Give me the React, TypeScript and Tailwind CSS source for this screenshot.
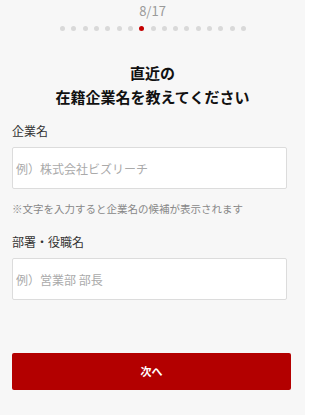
import React from "react";

export default function App() {
  const dots = Array.from({ length: 17 }, (_, i) => i);
  return (
    <div
      className="w-[305px] h-[415px] bg-[#f7f7f7] overflow-hidden"
      style={{ fontFamily: '"Noto Sans CJK JP", "Noto Sans", sans-serif' }}
    >
      <div className="pt-[3px] text-center text-[13px] leading-[16px] text-[#9a9a9a]">8/17</div>
      <div className="mt-[7px] flex justify-center gap-[6.3px] pl-[1px]">
        {dots.map((i) => (
          <span
            key={i}
            className={
              i === 7
                ? "block w-[5px] h-[5px] rounded-full bg-[#c40000]"
                : "block w-[5px] h-[5px] rounded-full bg-[#d9d9d9]"
            }
          />
        ))}
      </div>
      <h1 className="mt-[30px] text-center text-[15px] leading-[24px] font-bold text-[#111]">
        直近の
        <br />
        在籍企業名を教えてください
      </h1>
      <div className="px-[12px]">
        <div className="mt-[13px] text-[12px] leading-[18px] text-[#333]">企業名</div>
        <input
          className="mt-[7px] block w-[275px] h-[42px] bg-white border border-[#dcdcdc] rounded-[2px] px-[3px] text-[12px] text-[#333] placeholder:text-[#aaaaaa] outline-none"
          placeholder="例）株式会社ビズリーチ"
        />
        <div className="mt-[13px] text-[10.5px] leading-[14px] text-[#888]">
          ※文字を入力すると企業名の候補が表示されます
        </div>
        <div className="mt-[17px] text-[12px] leading-[18px] text-[#333]">部署・役職名</div>
        <input
          className="mt-[7px] block w-[275px] h-[42px] bg-white border border-[#dcdcdc] rounded-[2px] px-[3px] text-[12px] text-[#333] placeholder:text-[#aaaaaa] outline-none"
          placeholder="例）営業部 部長"
        />
        <button className="mt-[53px] flex items-center justify-center w-[279px] h-[37px] bg-[#b30000] rounded-[2px] text-white text-[11px] font-bold">
          次へ
        </button>
      </div>
    </div>
  );
}
